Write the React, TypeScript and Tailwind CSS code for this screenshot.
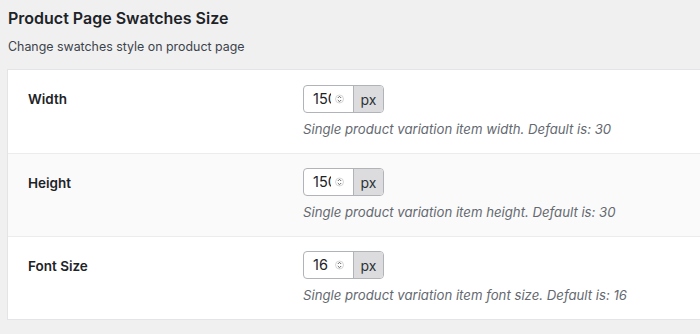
const rows = [
  { label: 'Width', value: '150', help: 'Single product variation item width. Default is: 30', alt: false },
  { label: 'Height', value: '150', help: 'Single product variation item height. Default is: 30', alt: true },
  { label: 'Font Size', value: '16', help: 'Single product variation item font size. Default is: 16', alt: false },
];

function Spinner() {
  return (
    <svg width="9" height="12" viewBox="0 0 9 12" className="shrink-0 text-[#555]">
      <circle cx="4.5" cy="6" r="4" fill="none" stroke="#ccc" strokeWidth="0.8" />
      <path d="M2.8 5 L4.5 3.3 L6.2 5" fill="none" stroke="currentColor" strokeWidth="0.9" />
      <path d="M2.8 7 L4.5 8.7 L6.2 7" fill="none" stroke="currentColor" strokeWidth="0.9" />
    </svg>
  );
}

export default function App() {
  return (
    <div className="h-[334px] w-[700px] overflow-hidden bg-[#f0f0f1] font-['Inter',sans-serif] text-[#1d2327]">
      <h2 className="pl-2 pt-[7px] text-[16px] font-semibold leading-[22px]">Product Page Swatches Size</h2>
      <p className="mt-[9px] pl-2 text-[12.4px] leading-[18px] text-[#3c434a]">Change swatches style on product page</p>
      <div className="ml-[7px] mt-[13px] w-[720px] border border-[#e2e4e7] bg-white">
        {rows.map((r, i) => (
          <div
            key={r.label}
            className={`flex h-[83px] ${r.alt ? 'bg-[#fafafa]' : 'bg-white'} ${i > 0 ? 'border-t border-[#ececec]' : ''}`}
          >
            <div className="w-[295px] pl-[20px] pt-[19px] text-[13.5px] font-semibold leading-[20px]">{r.label}</div>
            <div className={i > 0 ? 'pt-[14px]' : 'pt-[15px]'}>
              <div className="flex h-[28px] w-[81px] overflow-hidden rounded-[4px] border border-[#b0b3b7] bg-white">
                <div className="flex w-[49px] items-center gap-[4px] pl-[9px] text-[14.5px] text-[#1d2327]">
                  <span className="w-[18px] overflow-hidden whitespace-nowrap">{r.value}</span>
                  <Spinner />
                </div>
                <div className="flex flex-1 items-center justify-center border-l border-[#b0b3b7] bg-[#dcdcde] text-[14px] text-[#2c3338]">px</div>
              </div>
              <p className="mt-[7px] text-[13.2px] italic leading-[18px] text-[#646970]">{r.help}</p>
            </div>
          </div>
        ))}
      </div>
    </div>
  );
}
